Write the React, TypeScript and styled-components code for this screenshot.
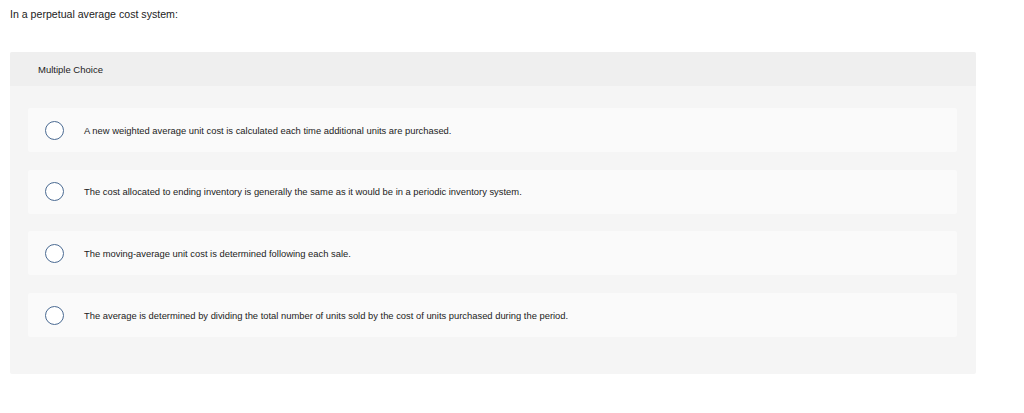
import styled, { createGlobalStyle } from 'styled-components';

const GlobalStyle = createGlobalStyle`
  html, body {
    margin: 0;
    padding: 0;
    background: #ffffff;
  }
  body {
    font-family: 'Liberation Sans', Arial, sans-serif;
    color: #222222;
  }
`;

const Page = styled.div`
  width: 1024px;
  height: 413px;
  padding: 7px 10px 0 10px;
  box-sizing: border-box;
`;

const Prompt = styled.p`
  margin: 0;
  font-size: 10.6px;
  line-height: 14px;
  color: #222222;
`;

const Panel = styled.div`
  margin-top: 31px;
  width: 966px;
  background: #f5f5f5;
  border-radius: 2px;
`;

const PanelHeader = styled.div`
  height: 34px;
  display: flex;
  align-items: center;
  padding-left: 28px;
  background: #efefef;
  border-radius: 2px 2px 0 0;
  font-size: 9.5px;
  color: #222222;
`;

const OptionList = styled.div`
  display: flex;
  flex-direction: column;
  gap: 17.7px;
  padding: 22px 19px 37px 18px;
`;

const OptionCard = styled.label`
  height: 44px;
  display: flex;
  align-items: center;
  padding-left: 17px;
  background: #fafafa;
  border-radius: 2px;
  cursor: pointer;
`;

const Radio = styled.span`
  width: 17px;
  height: 17px;
  flex: none;
  border: 1px solid #4a6a92;
  border-radius: 50%;
  background: #ffffff;
`;

const OptionText = styled.span`
  margin-left: 20px;
  font-size: 9.4px;
  color: #222222;
`;

const options = [
  'A new weighted average unit cost is calculated each time additional units are purchased.',
  'The cost allocated to ending inventory is generally the same as it would be in a periodic inventory system.',
  'The moving-average unit cost is determined following each sale.',
  'The average is determined by dividing the total number of units sold by the cost of units purchased during the period.',
];

export default function App() {
  return (
    <>
      <GlobalStyle />
      <Page>
        <Prompt>In a perpetual average cost system:</Prompt>
        <Panel>
          <PanelHeader>Multiple Choice</PanelHeader>
          <OptionList>
            {options.map(text => (
              <OptionCard key={text}>
                <Radio />
                <OptionText>{text}</OptionText>
              </OptionCard>
            ))}
          </OptionList>
        </Panel>
      </Page>
    </>
  );
}
